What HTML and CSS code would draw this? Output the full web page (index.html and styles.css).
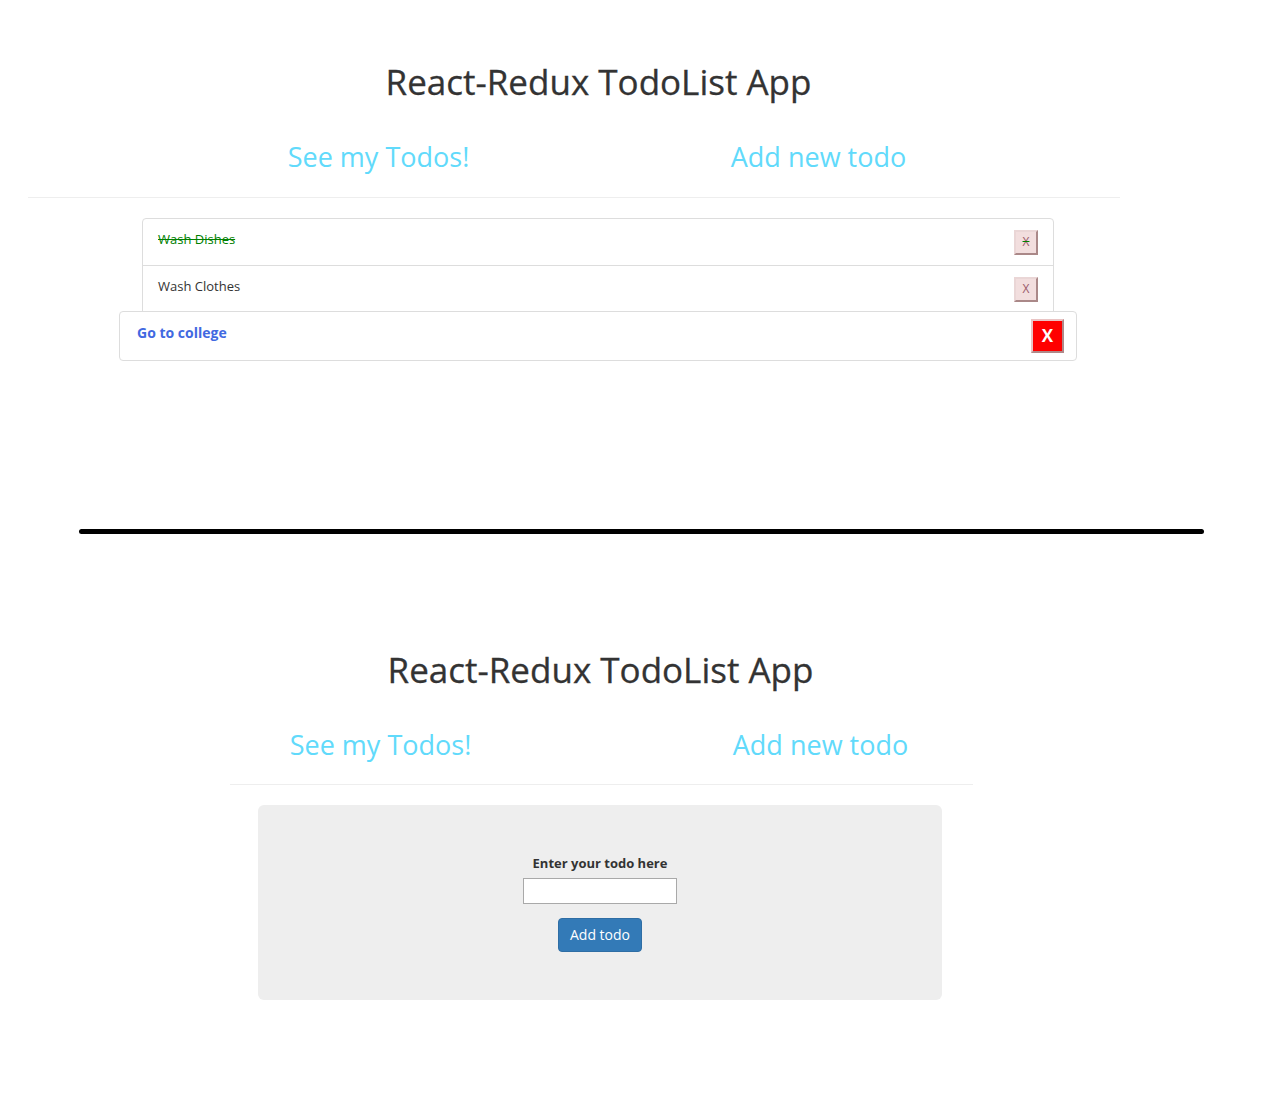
FILE: index.html
```html
<!DOCTYPE html>
<html>
<head>
<meta charset="utf-8">
<link rel="stylesheet" href="styles.css">
</head>
<body>
<section class="app app-top">
  <h1 class="title">React-Redux TodoList App</h1>
  <nav class="nav">
    <a class="nav-link" href="#">See my Todos!</a>
    <a class="nav-link" href="#">Add new todo</a>
  </nav>
  <hr class="rule rule-top">
  <ul class="list">
    <li class="item item-done"><span class="item-text">Wash Dishes</span><button class="del del-done">X</button></li>
    <li class="item"><span class="item-text">Wash Clothes</span><button class="del">X</button></li>
    <li class="item item-hover"><span class="item-text">Go to college</span><button class="del del-hover">X</button></li>
  </ul>
</section>

<div class="divider"></div>

<section class="app app-bottom">
  <h1 class="title">React-Redux TodoList App</h1>
  <nav class="nav">
    <a class="nav-link" href="#">See my Todos!</a>
    <a class="nav-link" href="#">Add new todo</a>
  </nav>
  <hr class="rule rule-bottom">
  <div class="panel">
    <form class="form">
      <label class="label" for="todo">Enter your todo here</label>
      <input class="input" id="todo" type="text">
      <button class="add" type="button">Add todo</button>
    </form>
  </div>
</section>
</body>
</html>
```

FILE: styles.css
```css
* { box-sizing: border-box; }
html, body { margin: 0; padding: 0; background: #fff; }
body {
  font-family: "Open Sans", "Noto Sans", Arial, sans-serif;
  color: #333;
  height: 1110px;
}

.app { display: flex; flex-direction: column; }
.app-top { width: 1197px; padding-top: 62px; }
.app-bottom { width: 1201px; margin-top: 116px; }

.title {
  margin: 0;
  font-size: 35px;
  line-height: 40px;
  font-weight: 500;
  color: #333;
  text-align: center;
  -webkit-text-stroke: 0.3px #333;
}

.nav {
  display: flex;
  justify-content: center;
  margin-top: 37px;
}
.nav-link {
  width: 440px;
  text-align: center;
  font-size: 27px;
  line-height: 36px;
  color: #61dafb;
  text-decoration: none;
  font-weight: 400;
}

.rule { border: 0; border-top: 1px solid #eee; height: 0; margin: 0; }
.rule-top { margin-top: 22px; margin-left: 28px; width: 1092px; }
.rule-bottom { margin-top: 21px; margin-left: 230px; width: 743px; }

.list {
  list-style: none;
  margin: 20px 0 0 142px;
  padding: 0;
  width: 912px;
}
.item {
  display: flex;
  align-items: center;
  justify-content: space-between;
  height: 48px;
  padding: 10px 15px;
  border: 1px solid #ddd;
  margin-bottom: -1px;
  background: #fff;
  font-size: 13px;
}
.item-text { align-self: flex-start; line-height: 20px; }
.item:first-child { border-radius: 4px 4px 0 0; }
.item-done .item-text { color: #008000; text-decoration: line-through; }
.item-hover {
  margin-left: -23px;
  width: 958px;
  height: 50px;
  margin-top: -2px;
  padding: 7px 12px 7px 17px;
  border-radius: 4px;
  position: relative;
}
.item-hover .item-text {
  color: #4169e1;
  font-weight: 700;
  font-size: 14px;
  padding-top: 3px;
  line-height: 22px;
}

.del {
  width: 24px;
  height: 25px;
  padding: 0;
  font-family: "Open Sans", Arial, sans-serif;
  font-size: 12px;
  line-height: 18px;
  color: #9a5a6a;
  background: #f2dede;
  border: 2px solid;
  border-color: #ead6d6 #a88 #a88 #ead6d6;
}
.del-done { text-decoration: line-through; text-decoration-color: #008000; }
.del-hover {
  width: 33px;
  height: 34px;
  background: #ff0000;
  color: #fff;
  font-weight: 700;
  font-size: 17px;
  border-color: #e9c4c4 #b08888 #b08888 #e9c4c4;
}

.divider {
  margin: 169px 0 0 79px;
  width: 1125px;
  height: 5px;
  background: #000;
  border-radius: 3px;
}

.panel {
  margin: 20px 0 0 258px;
  width: 684px;
  height: 195px;
  background: #eee;
  border-radius: 6px;
  display: flex;
  align-items: center;
  justify-content: center;
}
.form {
  display: flex;
  flex-direction: column;
  align-items: center;
  padding-top: 0;
}
.label {
  font-size: 13px;
  font-weight: 700;
  line-height: 18px;
  color: #333;
}
.input {
  margin-top: 6px;
  width: 154px;
  height: 26px;
  border: 1px solid #a9a9a9;
  background: #fff;
  padding: 0;
}
.add {
  margin-top: 14px;
  width: 84px;
  height: 34px;
  padding: 0;
  font-family: "Open Sans", Arial, sans-serif;
  font-size: 14px;
  color: #fff;
  background: #337ab7;
  border: 1px solid #2e6da4;
  border-radius: 4px;
}
```
